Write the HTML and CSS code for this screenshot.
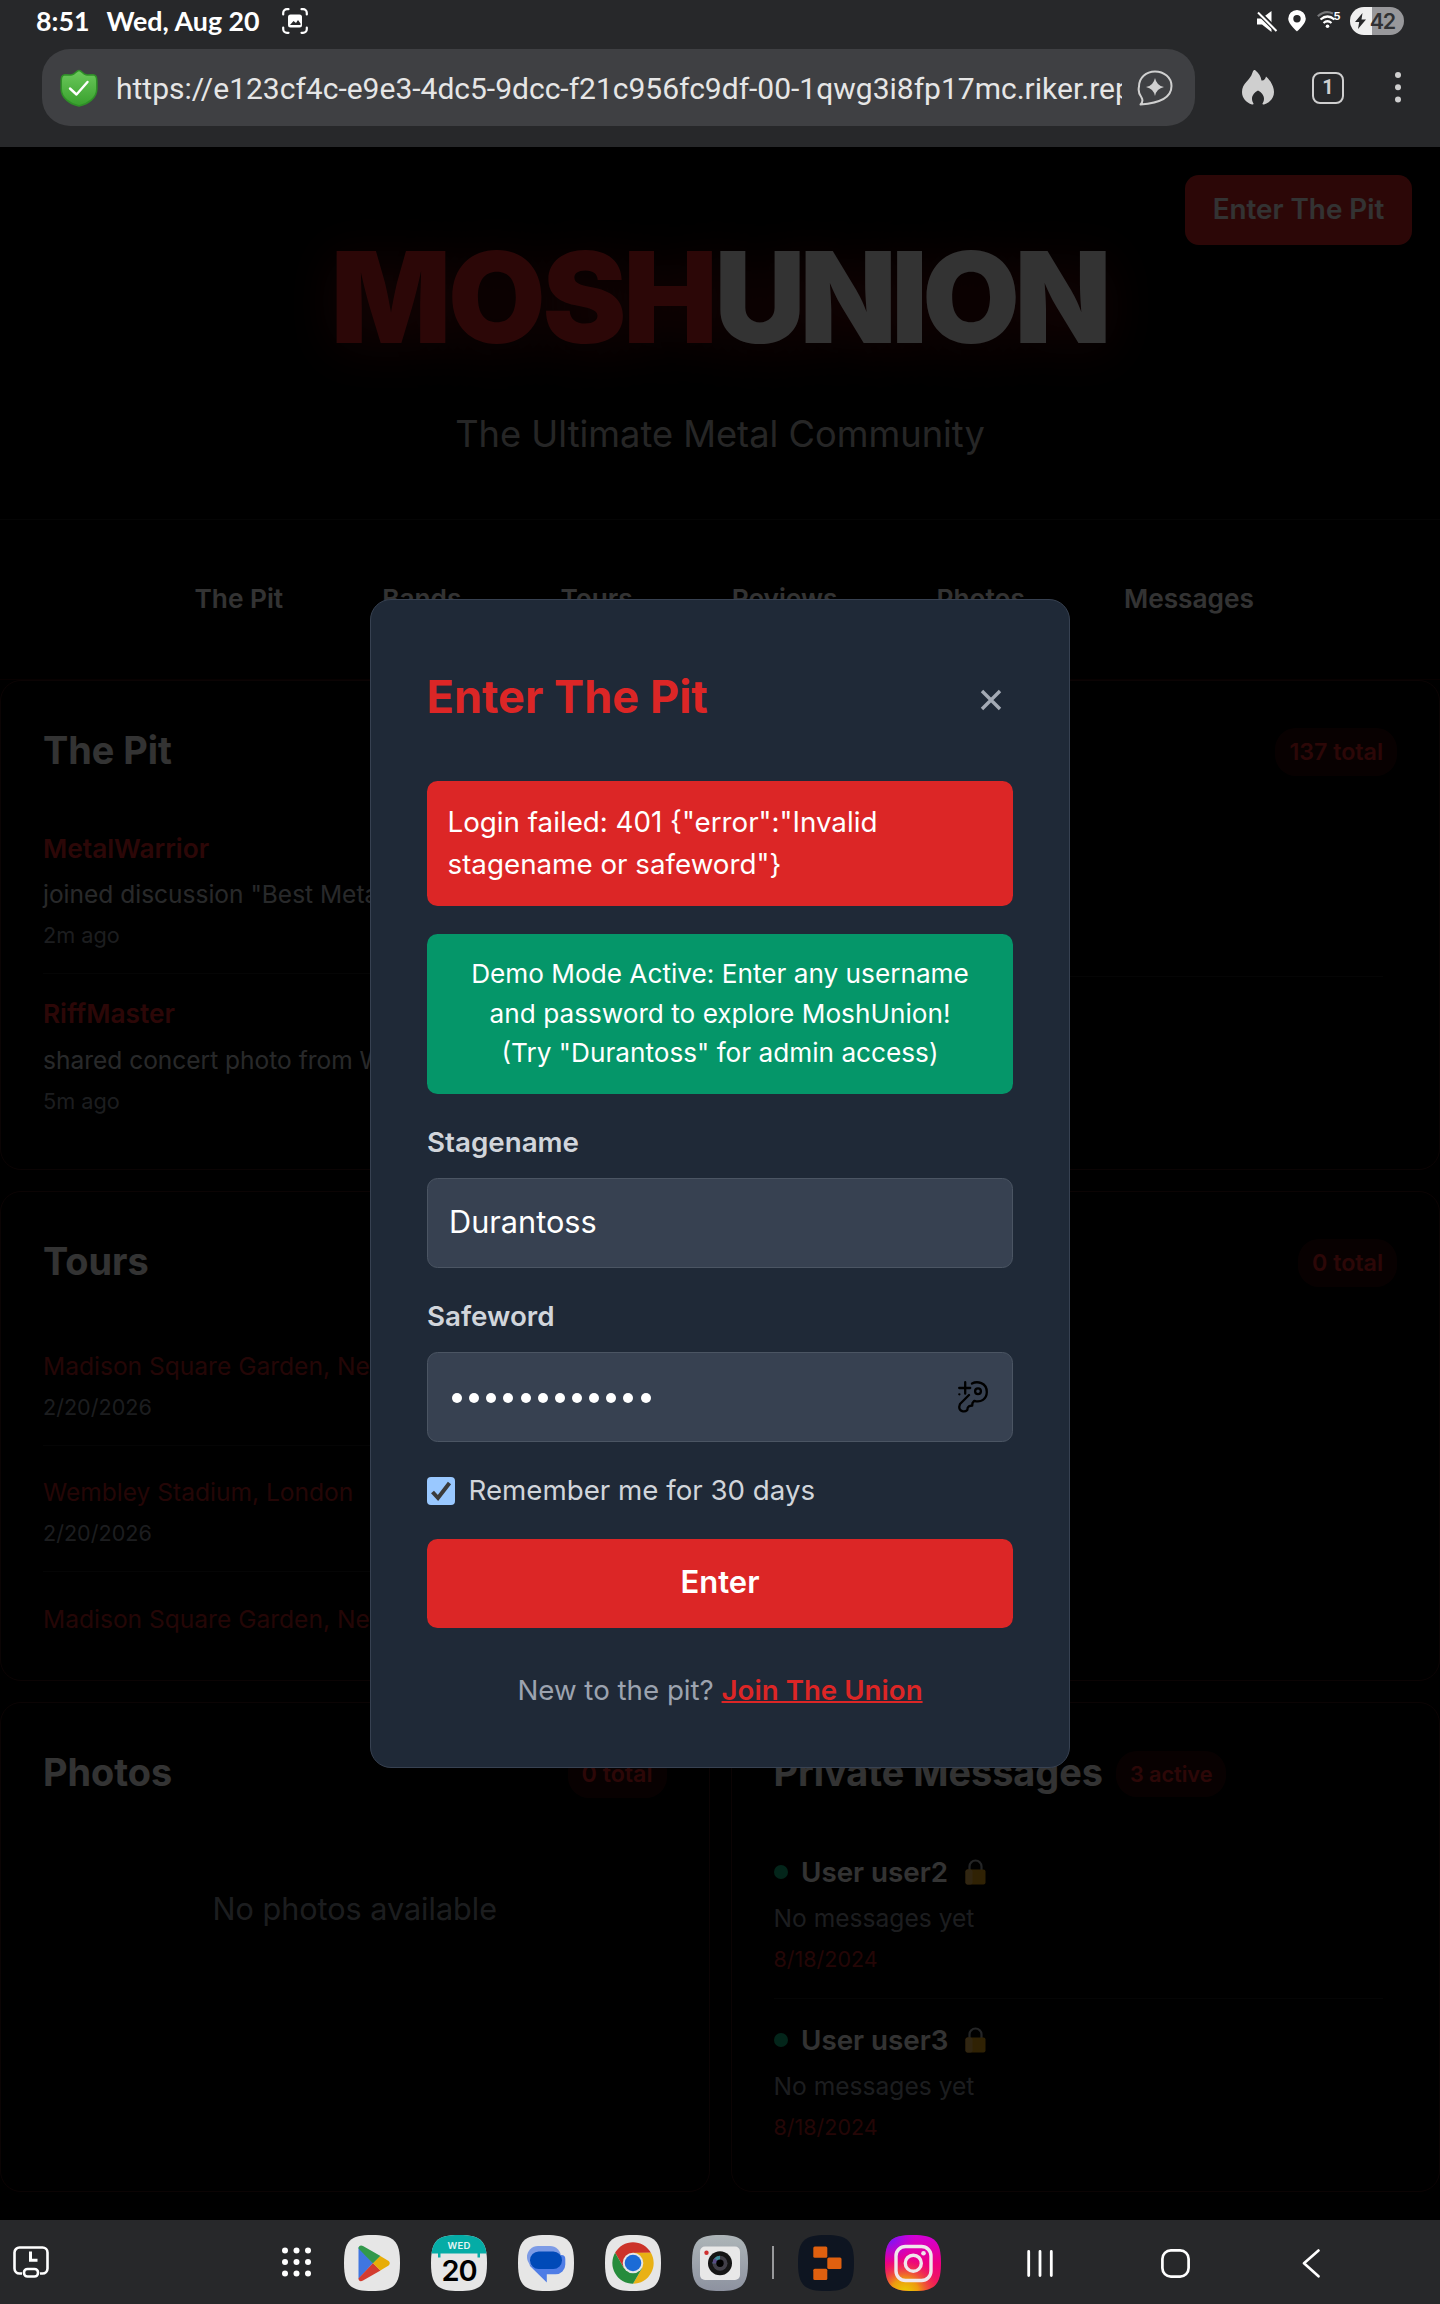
FILE: index.html
```html
<!DOCTYPE html>
<html lang="en">
<head>
<meta charset="utf-8">
<title>MoshUnion</title>
<link rel="stylesheet" href="styles.css">
</head>
<body>
<header class="chrome">
  <div class="status">
    <span class="clock">8:51</span>
    <span class="date">Wed, Aug 20</span>
    <svg class="shot" width="26" height="26" viewBox="0 0 26 26" fill="none" stroke="#fff" stroke-width="2.2" stroke-linecap="round"><path d="M1.2 6.5V5A3.8 3.8 0 0 1 5 1.2h1.5M19.500 1.2H21A3.8 3.8 0 0 1 24.800 5v1.500M24.800 19.500V21A3.800 3.800 0 0 1 21 24.800h-1.500M6.500 24.800H5A3.800 3.800 0 0 1 1.200 21v-1.500"/><rect x="6" y="6.500" width="14" height="13" rx="2.500" fill="#fff" stroke="none"/><path d="M8 17l3.500-4 2.500 2 2-3 2.500 3.500V17z" fill="#27282a" stroke="none"/></svg>
    <div class="tray">
      <svg width="21" height="21" viewBox="0 0 21 21"><path fill="#fff" d="M0 7.500h4.500L14.500 0v21L5 13.500H0z"/><path stroke="#27282a" stroke-width="5" d="M1 1l19 19"/><path stroke="#fff" stroke-width="2" d="M1 1.500l18.500 18.500"/></svg>
      <svg class="pin" width="18" height="22" viewBox="0 0 18 22"><path fill="#fff" fill-rule="evenodd" d="M9 0a8.800 8.800 0 0 1 8.800 8.800C17.800 14 9 21.500 9 21.500S.2 14 .2 8.800A8.800 8.800 0 0 1 9 0zm0 5a3.700 3.700 0 1 0 0 7.400A3.700 3.700 0 0 0 9 5z"/></svg>
      <svg class="wifi" width="26" height="26" viewBox="0 -4 26 26" fill="none" stroke="#fff" stroke-width="2.200"><path stroke="#77787a" d="M.8 5.300Q8-1.500 16 2.500"/><path d="M3.500 8.500q7-6 14 0M6.500 12q4-3.500 8 0"/><circle cx="10.500" cy="15.300" r="1.800" fill="#fff" stroke="none"/><text x="16.500" y="9" class="wifi-gen">5</text></svg>
      <span class="battery"><svg width="11" height="16" viewBox="0 0 11 16"><path fill="#27282a" d="M7.500 0L0 9h4.200L3 16l8-9.500H6.500z"/></svg><b>42</b></span>
    </div>
  </div>
  <div class="toolbar">
    <div class="omnibox">
      <svg class="shield" width="38" height="38" viewBox="0 0 38 38"><defs><linearGradient id="sh" x1="0" y1="0" x2="0" y2="1"><stop offset="0" stop-color="#6cc95c"/><stop offset="1" stop-color="#37a02c"/></linearGradient></defs><path d="M19 1.500c2.500 0 4 3.700 7 4.300 3 .6 5-.3 8 .2 2.500.5 2.800 3 2.800 6v8C36.800 29 28 35 19 37 10 35 1.200 29 1.200 20v-8c0-3 .3-5.500 2.800-6 3-.5 5 .4 8-.2 3-.6 4.500-4.300 7-4.300z" fill="url(#sh)" stroke="#2f8f28" stroke-width="1.600"/><path d="M10 19.500l6.500 6L27.500 13" fill="none" stroke="#fff" stroke-width="2.400" stroke-linecap="round" stroke-linejoin="round"/></svg>
      <span class="url">https://e123cf4c-e9e3-4dc5-9dcc-f21c956fc9df-00-1qwg3i8fp17mc.riker.rep</span>
      <svg width="36" height="36" viewBox="0 0 36 36"><path d="M4.500 27.500A15.500 14 0 0 1 2 16.500C2 8 9 1.500 18 1.500s16.500 6 16.500 14.500c0 11-9.500 17-31 18.500 2.500-2.500 2.500-4.500 1-7z" fill="none" stroke="#d0d0d0" stroke-width="2" stroke-linejoin="round"/><path fill="#d0d0d0" d="M18 8q1.500 7.500 9 9-7.500 1.500-9 9-1.500-7.500-9-9 7.500-1.500 9-9z"/></svg>
    </div>
    <svg class="flame" width="32" height="35" viewBox="0 0 32 35"><path fill="#cfcfcf" d="M13 0c4 3 6 7 6.500 10.500C22 11 23.500 8.500 24 6.500c5 4.500 8 10 8 15.500 0 6-4 10.500-10 12.500-1.500.4-2-.6-1.200-1.500 3-5 0-10-4.800-12.500-4.800 2.500-7.800 7.500-4.800 12.500.8.900.3 1.900-1.200 1.500C4 32.500 0 28 0 22 0 13 8 11 10.500 2.500 11 .8 12-.6 13 0z"/></svg>
    <span class="tabs">1</span>
    <svg class="kebab" width="6" height="31" viewBox="0 0 6 31" fill="#cfcfcf"><circle cx="3" cy="3" r="3"/><circle cx="3" cy="15.300" r="3"/><circle cx="3" cy="27.500" r="3"/></svg>
  </div>
</header>

<main class="page">
  <section class="hero">
    <h1><span class="mosh">MOSH</span><span>UNION</span></h1>
    <p>The Ultimate Metal Community</p>
    <button class="login">Enter The Pit</button>
  </section>
  <nav class="nav"><div class="links"><a>The Pit</a><a>Bands</a><a>Tours</a><a>Reviews</a><a>Photos</a><a>Messages</a></div></nav>
  <div class="grid">
    <section class="card">
      <div class="head"><h2>The Pit</h2></div>
      <div class="post"><h3>MetalWarrior</h3><p>joined discussion "Best Metal</p><time>2m ago</time></div>
      <div class="post"><h3>RiffMaster</h3><p>shared concert photo from W</p><time>5m ago</time></div>
    </section>
    <section class="card">
      <div class="head end"><span class="badge">137 total</span></div>
      <div class="msg"></div>
    </section>
    <section class="card">
      <div class="head"><h2>Tours</h2></div>
      <div class="tour"><p>Madison Square Garden, New</p><time>2/20/2026</time></div>
      <div class="tour"><p>Wembley Stadium, London</p><time>2/20/2026</time></div>
      <div class="tour"><p>Madison Square Garden, New</p></div>
    </section>
    <section class="card">
      <div class="head end"><span class="badge">0 total</span></div>
    </section>
    <section class="card">
      <div class="head"><h2>Photos</h2><span class="badge">0 total</span></div>
      <p class="empty">No photos available</p>
    </section>
    <section class="card">
      <div class="head start"><h2>Private Messages</h2><span class="badge small">3 active</span></div>
      <div class="msg"><h3><i></i>User user2<svg width="21" height="26" viewBox="0 0 21 26"><path d="M4.500 12V7.500a6 6 0 0 1 12 0V12" fill="none" stroke="#b4b8bd" stroke-width="2.200"/><rect x=".5" y="10.500" width="20" height="15" rx="2" fill="#f0a818"/><rect x=".5" y="10.500" width="7" height="15" rx="2" fill="#f3bd5c"/></svg></h3><p>No messages yet</p><time>8/18/2024</time></div>
      <div class="msg"><h3><i></i>User user3<svg width="21" height="26" viewBox="0 0 21 26"><path d="M4.500 12V7.500a6 6 0 0 1 12 0V12" fill="none" stroke="#b4b8bd" stroke-width="2.200"/><rect x=".5" y="10.500" width="20" height="15" rx="2" fill="#f0a818"/><rect x=".5" y="10.500" width="7" height="15" rx="2" fill="#f3bd5c"/></svg></h3><p>No messages yet</p><time>8/18/2024</time></div>
    </section>
  </div>

  <div class="overlay">
    <form class="modal">
      <div class="modal-head"><h2>Enter The Pit</h2><svg width="22" height="22" viewBox="0 0 22 22"><path d="M2 2l18 18M20 2L2 20" stroke="#a3aab5" stroke-width="3.400"/></svg></div>
      <div class="error">Login failed: 401 {"error":"Invalid<br>stagename or safeword"}</div>
      <div class="demo">Demo Mode Active: Enter any username<br>and password to explore MoshUnion!<br>(Try "Durantoss" for admin access)</div>
      <label class="label">Stagename</label>
      <div class="field"><span>Durantoss</span></div>
      <label class="label">Safeword</label>
      <div class="field secret"><div class="dots"><i></i><i></i><i></i><i></i><i></i><i></i><i></i><i></i><i></i><i></i><i></i><i></i></div>
        <svg width="30" height="32" viewBox="0 0 30 32" fill="none" stroke="#000" stroke-width="2.300" stroke-linecap="round" stroke-linejoin="round"><path d="M14 2.600C19 -.2 28.800 1.500 28.800 11c0 7-6 11-12.500 8.800L14.500 22l-.3 2.500-3 .6-1.400 1.400-.6 2.700C6.500 31.500 1.200 30.500 1.200 26L2 23l9-9"/><circle cx="20" cy="10.300" r="2.900"/><path d="M7.200 1.200v11.500M1.200 7h11"/><path d="M1.300 13.300h.1"/></svg></div>
      <label class="remember"><span class="check"><svg width="22" height="22" viewBox="0 0 22 22"><path d="M2.500 12l5.500 6L19.500 3" fill="none" stroke="#3b3b3b" stroke-width="4"/></svg></span><span class="remember-text">Remember me for 30 days</span></label>
      <button type="button" class="submit">Enter</button>
      <p class="join">New to the pit? <a>Join The Union</a></p>
    </form>
  </div>
</main>

<footer class="taskbar">
  <svg class="desk" width="36" height="32" viewBox="0 0 36 32" fill="none" stroke="#fff" stroke-width="2.600"><path d="M9 27.500H6.500a5 5 0 0 1-5-5v-16a5 5 0 0 1 5-5h23a5 5 0 0 1 5 5v16a5 5 0 0 1-5 5H27"/><rect x="11" y="23" width="14" height="7.500" rx="3.500"/><path d="M17.500 5.500v8.700h7" stroke-width="3"/></svg>
  <svg class="apps" width="29" height="30" viewBox="0 0 29 30" fill="#fff"><circle cx="3" cy="3.500" r="3"/><circle cx="14.500" cy="3.500" r="3"/><circle cx="26" cy="3.500" r="3"/><circle cx="3" cy="15" r="3"/><circle cx="14.500" cy="15" r="3"/><circle cx="26" cy="15" r="3"/><circle cx="3" cy="26.500" r="3"/><circle cx="14.500" cy="26.500" r="3"/><circle cx="26" cy="26.500" r="3"/></svg>
  <div class="dock">
    <svg viewBox="0 0 56 56"><defs><path id="sq" d="M28 0C50 0 56 6 56 28S50 56 28 56 0 50 0 28 6 0 28 0Z"/><clipPath id="sqc"><use href="#sq"/></clipPath></defs><use href="#sq" fill="#e6e6e6"/><path fill="#4076e0" d="M14.500 12v32l14.500-16z"/><path fill="#32994b" d="M14.500 13.500c0-3 2.500-3.700 4.500-2.500l17.500 10L29 28.500z"/><path fill="#d33c30" d="M14.500 43.500c0 3 2.500 3.200 4.500 2L36.500 35.500 29 28z"/><path fill="#e7ad07" d="M36.300 21l7.500 4.500c2.600 1.500 2.600 4 0 5.500l-7.500 4.500L29 28.200z"/></svg>
    <svg viewBox="0 0 56 56"><g clip-path="url(#sqc)"><path fill="#e6e6e6" d="M0 0h56v56H0z"/><path fill="#05aca6" d="M0 0h56v18.500H49v4h-2.500v-4h-37v4H7v-4H0z"/></g><text x="28" y="13.500" class="cal-day">WED</text><text x="28" y="45.500" class="cal-num">20</text></svg>
    <svg viewBox="0 0 56 56"><use href="#sq" fill="#e6e6e6"/><path fill="#4f7de6" d="M9.500 20h34a4 4 0 0 1 3.800 4v5.500A9.800 9.800 0 0 1 37.500 39.300h-8.700V47.500L12 31z"/><rect x="9" y="11" width="34" height="22" rx="11" fill="#7c9be6"/><rect x="12" y="16.500" width="32" height="17.500" rx="8.700" fill="#004ab8"/></svg>
    <svg viewBox="0 0 56 56"><use href="#sq" fill="#e6e6e6"/><path fill="#cc3329" d="M10.100 17.650A20.700 20.700 0 0 1 45.900 17.650L28 18 19 33.200z"/><path fill="#e9b115" d="M45.900 17.650A20.700 20.700 0 0 1 28 48.700L37 33.200 28 17.650z"/><path fill="#268c3c" d="M28 48.700A20.700 20.700 0 0 1 10.100 17.650L19 33.200 37 33.200z"/><circle cx="28" cy="28" r="10.300" fill="#e6e6e6"/><circle cx="28" cy="28" r="8.300" fill="#1b6bd6"/></svg>
    <svg viewBox="0 0 56 56"><defs><linearGradient id="cam" x1="0" y1="0" x2="0" y2="1"><stop offset="0" stop-color="#adb5b8"/><stop offset="1" stop-color="#8d92a0"/></linearGradient></defs><use href="#sq" fill="url(#cam)"/><rect x="8" y="11.500" width="40" height="33.500" rx="5" fill="#e8e8e8"/><circle cx="14.500" cy="17.800" r="2.200" fill="#cf3030"/><circle cx="28" cy="28.200" r="12" fill="#151515"/><circle cx="28" cy="28.200" r="7.500" fill="#413f48"/><path d="M28 20.700a7.500 7.500 0 0 0-7.500 7.500H28z" fill="#3f8d9b"/><path d="M20.500 28.200a7.500 7.500 0 0 1 2-5.200l5.500 5.200z" fill="#5b4c86"/><circle cx="28" cy="28.200" r="3.700" fill="#000"/></svg>
  </div>
  <span class="sep"></span>
  <div class="dock recent">
    <svg viewBox="0 0 56 56"><use href="#sq" fill="#0e1521"/><g fill="#df600f"><rect x="15.300" y="11.500" width="14" height="11.300" rx="1.500"/><rect x="29.300" y="22.600" width="14.200" height="11.300" rx="1.500"/><rect x="15.300" y="33.700" width="14" height="11.300" rx="1.500"/></g></svg>
    <svg viewBox="0 0 56 56"><defs><linearGradient id="ig" x1="0" y1="0" x2="0" y2="1"><stop offset="0" stop-color="#d200d8"/><stop offset=".5" stop-color="#ee0082"/><stop offset="1" stop-color="#f02050"/></linearGradient><radialGradient id="igy" cx=".35" cy="1.050" r=".65"><stop offset="0" stop-color="#e8d400"/><stop offset=".4" stop-color="#ee9a10"/><stop offset="1" stop-color="#f03040" stop-opacity="0"/></radialGradient><radialGradient id="igp" cx=".05" cy=".02" r=".5"><stop offset="0" stop-color="#5a20ff"/><stop offset="1" stop-color="#b000f0" stop-opacity="0"/></radialGradient></defs><use href="#sq" fill="url(#ig)"/><use href="#sq" fill="url(#igy)"/><use href="#sq" fill="url(#igp)"/><g fill="none" stroke="#f0e6ec" stroke-width="3.400"><rect x="11" y="11.500" width="35" height="34" rx="9.500"/><circle cx="28.300" cy="28.200" r="8"/></g><circle cx="38.500" cy="18.200" r="2.300" fill="#f0e6ec"/></svg>
  </div>
  <svg class="recents" width="26" height="27" viewBox="0 0 26 27" stroke="#fff" stroke-width="2.800" stroke-linecap="round"><path d="M1.700 1.500v24M13 1.500v24M24.300 1.500v24"/></svg>
  <svg class="home" width="29" height="29" viewBox="0 0 29 29"><rect x="1.400" y="1.400" width="26.200" height="26.200" rx="8.500" fill="none" stroke="#fff" stroke-width="2.700"/></svg>
  <svg class="back" width="18" height="29" viewBox="0 0 18 29"><path d="M16.500 1.500L2 14.300l14.500 13" fill="none" stroke="#fff" stroke-width="2.600" stroke-linecap="round" stroke-linejoin="round"/></svg>
</footer>
</body>
</html>
```
FILE: styles.css
```css
* { box-sizing: border-box; margin: 0; padding: 0; }
body { width: 1440px; height: 2304px; display: flex; flex-direction: column; overflow: hidden; background: #000; font-family: "Inter", "Liberation Sans", sans-serif; color: #fff; }
svg { display: block; flex: none; }
button { border: 0; font-family: inherit; color: inherit; }

/* Device status bar and browser toolbar */
.chrome { height: 147px; background: #27282a; flex: none; }
.status { height: 42px; display: flex; align-items: center; padding: 0 36px; font: 700 26.800px/42px "Lato", sans-serif; }
.clock, .date { margin-top: -1px; }
.date { margin-left: 17px; }
.shot { margin-left: 22px; }
.tray { margin-left: auto; display: flex; align-items: center; }
.pin { margin-left: 10px; }
.wifi { margin: 0 7px 2px 11px; }
.wifi-gen { font: 700 11px "Inter", sans-serif; fill: #fff; stroke: none; }
.battery { width: 54px; height: 28px; border-radius: 14px; background: linear-gradient(90deg, #efefef 22px, #98989b 22px); display: flex; align-items: center; justify-content: space-between; padding: 0 9px 0 5px; color: #303133; }
.battery b { font: 600 21.500px "Inter", sans-serif; letter-spacing: -1.200px; }
.toolbar { display: flex; align-items: center; padding: 7px 39px 0 42px; }
.omnibox { width: 1153px; height: 77px; border-radius: 28px; background: #3f4043; display: flex; align-items: center; padding: 0 21px 0 18px; }
.url { flex: none; width: 1006px; overflow: hidden; white-space: nowrap; margin: 2px 15px 0 18px; font: 400 30px/44px "Roboto", sans-serif; color: #e6e6e6; }
.flame { margin-left: 47px; }
.tabs { width: 32px; height: 32px; border: 2.500px solid #cfcfcf; border-radius: 8px; margin-left: 38px; text-align: center; font: 700 20px/27px "Roboto", sans-serif; color: #cfcfcf; }
.kebab { margin-left: 51px; }

/* Site */
.page { position: relative; height: 2073px; flex: none; overflow: hidden; background: #000; }
.hero { position: relative; height: 373px; padding-top: 88px; text-align: center; border-bottom: 1px solid #1c1c1c; }
.hero h1 { font-size: 126px; line-height: 126px; font-weight: 900; letter-spacing: -5.600px; text-shadow: 0 7px 53px rgba(220, 38, 38, .5); margin: -1px 0 1px -3.500px; }
.hero h1 .mosh { color: #dc2626; letter-spacing: -3.200px; }
.hero p { margin-top: 47px; font-size: 36.250px; line-height: 54px; color: #bdbdbd; }
.login { position: absolute; top: 28px; right: 28px; width: 227px; height: 70px; border-radius: 14px; background: #dc2626; font-size: 27.800px; font-weight: 600; padding-bottom: 2px; }
.nav { height: 160px; display: flex; align-items: center; padding: 0 186px 2px 194.500px; border-bottom: 1px solid #2a0707; }
.links { flex: 1; display: flex; justify-content: space-between; font-size: 26.250px; font-weight: 600; line-height: 40px; }
.grid { display: grid; grid-template-columns: 1fr 1fr; grid-auto-rows: 490px; gap: 21px; }
.card { border: 1px solid #3a1414; border-radius: 21px; padding: 41px 42px 0; overflow: hidden; min-width: 0; }
.head { height: 58px; margin-bottom: 28.500px; display: flex; align-items: center; justify-content: space-between; }
.head.end { justify-content: flex-end; }
.head.start { justify-content: flex-start; gap: 13px; }
.head h2 { font-size: 37.850px; line-height: 54px; font-weight: 700; padding-bottom: 2px; }
.badge { margin-top: 2px; padding: 0 14px; border-radius: 21px; background: rgba(220, 38, 38, .2); color: #dc2626; font-size: 23.200px; font-weight: 600; line-height: 48px; }
.badge.small { font-size: 21.600px; line-height: 46px; padding: 0 14px; }
.post, .tour, .msg { margin-right: 14px; border-bottom: 1px solid #1c1c1c; white-space: nowrap; display: flex; flex-direction: column; }
.post:last-child, .tour:last-child, .msg:last-child:not(:empty) { border-bottom: 0; }
.post { height: 165.500px; padding-top: 19px; }
.post h3 { font-size: 26.250px; line-height: 42px; font-weight: 600; color: #dc2626; }
.post p { font-size: 24.500px; line-height: 40px; margin: 4.500px 0 4px; color: #c8ccd2; }
.post time { font-size: 21.700px; line-height: 34px; color: #8a9099; }
.tour { height: 126px; padding-top: 26px; }
.tour:last-child { padding-top: 27px; }
.tour p { font-size: 24.550px; line-height: 40px; color: #b41f1f; }
.tour time { font-size: 21.600px; line-height: 34px; margin-top: 4.500px; color: #8a9099; }
.msg { height: 168px; padding-top: 19px; }
.msg h3 { display: flex; align-items: center; font-size: 27.750px; line-height: 45px; font-weight: 600; }
.msg h3 i { width: 14px; height: 14px; border-radius: 50%; background: #10b981; margin-right: 13.500px; }
.msg h3 svg { margin-left: 17px; }
.msg p { font-size: 24.600px; line-height: 40px; margin: 3.500px 0 4px; color: #8a8f99; }
.msg time { font-size: 21.500px; line-height: 34px; color: #b41f1f; }
.empty { padding-top: 55px; text-align: center; font-size: 30.550px; line-height: 46px; color: #8d939c; }

/* Login dialog */
.overlay { position: absolute; inset: 0; background: rgba(0, 0, 0, .8); display: flex; align-items: center; justify-content: center; }
.modal { width: 700px; height: 1169px; background: #1f2937; border: 1px solid #374151; border-radius: 21px; padding: 69px 56px 0; }
.modal-head { display: flex; align-items: center; justify-content: space-between; padding-right: 11px; }
.modal-head h2 { font-size: 45.150px; line-height: 54px; font-weight: 700; color: #dc2626; margin: 1px 0 -1px -.5px; }
.modal-head svg { margin-top: 7px; }
.error { margin-top: 58px; height: 125px; border-radius: 10.500px; background: #dc2626; padding: 20px 20.500px 0; font-size: 27.750px; line-height: 42px; }
.demo { margin-top: 28px; height: 160px; border-radius: 10.500px; background: #059669; padding-top: 20px; font-size: 26.200px; line-height: 39.500px; text-align: center; }
.label { display: block; margin-top: 26.500px; font-size: 27.750px; line-height: 42px; font-weight: 600; color: #d1d5db; }
.field { margin-top: 15.500px; height: 90px; background: #374151; border: 1px solid #4b5563; border-radius: 10.500px; display: flex; align-items: center; padding: 0 24px 3px 21px; font-size: 30.700px; }
.secret { justify-content: space-between; padding-left: 24px; padding-bottom: 0; }
.dots { display: flex; gap: 7.150px; padding-top: 2px; }
.dots i { width: 10px; height: 10px; border-radius: 50%; background: #fff; }
.remember { margin-top: 27.500px; display: flex; align-items: center; gap: 13.500px; font-size: 27.700px; line-height: 42px; color: #d1d5db; }
.remember-text { margin: -1px 0 1px; }
.check { width: 28px; height: 28px; border-radius: 4px; background: #99c8ff; display: flex; align-items: center; justify-content: center; }
.submit { display: block; width: 100%; margin-top: 27px; height: 89px; border-radius: 10.500px; background: #dc2626; font-size: 31px; font-weight: 600; padding-bottom: 4px; }
.join { margin-top: 41px; text-align: center; font-size: 27.700px; line-height: 42px; color: #9ca3af; }
.join a { color: #dc2626; font-weight: 600; text-decoration: underline; text-decoration-thickness: 2px; }

/* Taskbar */
.taskbar { height: 84px; flex: none; background: #27282a; display: flex; align-items: center; padding-left: 12.500px; }
.desk { margin-bottom: 0; }
.apps { margin-left: 233.500px; }
.dock { display: flex; gap: 31px; margin: 2px 0 0 33px; }
.dock svg { width: 56px; height: 56px; }
.dock.recent { margin-left: 23.500px; }
.sep { width: 2px; height: 33px; background: #98999b; margin-left: 24px; }
.cal-day { font: 600 9.500px "Inter", sans-serif; fill: #e6f5f4; text-anchor: middle; letter-spacing: .3px; }
.cal-num { font: 600 29px "Inter", sans-serif; fill: #000; text-anchor: middle; letter-spacing: -1px; }
.recents { margin: 2px 0 0 86px; }
.home { margin: 2px 0 0 108px; }
.back { margin: 2px 0 0 112.500px; }
```
